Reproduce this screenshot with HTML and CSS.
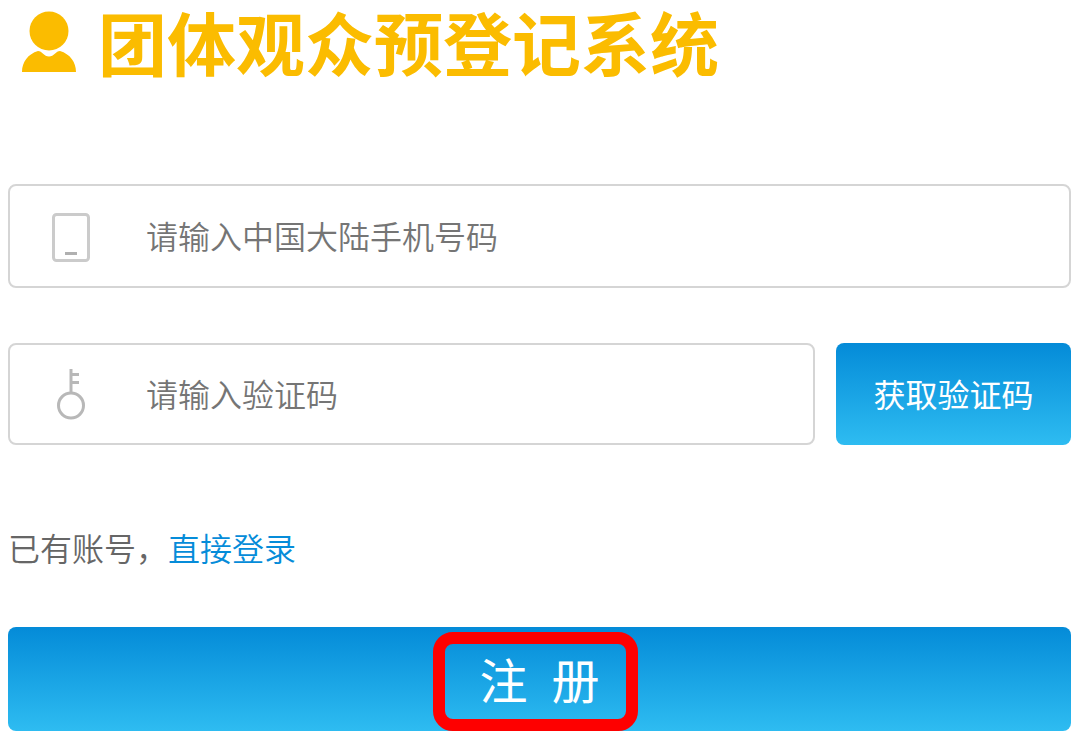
FILE: index.html
```html
<!DOCTYPE html>
<html lang="zh-CN">
<head>
    <meta charset="UTF-8">
    <meta name="viewport" content="width=device-width, initial-scale=1.0">
    <title>团体观众预登记系统</title>
    <link rel="stylesheet" href="styles.css">
</head>
<body>
    <main class="container">
        <header class="header">
            <svg class="user-icon" viewBox="0 0 56 62" aria-hidden="true">
                <circle cx="28" cy="20" r="19.5"/>
                <path d="M1 61C1 51 7 43 17 40C21 40 23 45.500 28 45.500C33 45.500 35 40 39 40C49 43 55 51 55 61Z"/>
            </svg>
            <h1>团体观众预登记系统</h1>
        </header>

        <form class="register-form">
            <label class="field">
                <svg class="field-icon" viewBox="0 0 40 52" aria-hidden="true">
                    <rect x="2.500" y="4.500" width="35" height="46" rx="3"/>
                    <path class="phone-key" d="M14 43.500H26"/>
                </svg>
                <input type="tel" name="phone" placeholder="请输入中国大陆手机号码" aria-label="手机号码">
            </label>

            <div class="code-row">
                <label class="field">
                    <svg class="field-icon key-icon" viewBox="0 0 40 52" aria-hidden="true">
                        <circle cx="20" cy="37.500" r="12.500"/>
                        <path d="M20 25V1"/>
                        <path d="M20 6.500H28M20 14.500H28"/>
                    </svg>
                    <input type="text" name="code" placeholder="请输入验证码" aria-label="验证码">
                </label>
                <button type="button" class="btn code-btn">获取验证码</button>
            </div>

            <p class="login-tip">已有账号，<a href="#login">直接登录</a></p>

            <button type="submit" class="btn submit-btn"><span class="highlight">注&ensp;册</span></button>
        </form>
    </main>
</body>
</html>
```
FILE: styles.css
```css
* {
    box-sizing: border-box;
}
body {
    font-family: "Noto Sans CJK SC", sans-serif;
    font-weight: 350;
    margin: 0;
    background: #fff;
}
.container {
    padding: 0 9px 6px 8px;
}
.header {
    display: flex;
    align-items: center;
    gap: 21px;
    height: 84px;
    padding-left: 13px;
    margin-bottom: 100px;
}
.user-icon {
    width: 56px;
    height: 62px;
    fill: #fbbc00;
}
h1 {
    margin: 0;
    font-size: 69px;
    line-height: 82px;
    padding-bottom: 2px;
    font-weight: 700;
    color: #fbbc00;
}
.field {
    display: flex;
    align-items: center;
    flex: 1;
    gap: 55px;
    height: 104px;
    padding: 0 41px;
    border: 2px solid #d5d5d5;
    border-radius: 8px;
}
.field-icon {
    flex: none;
    width: 40px;
    height: 52px;
    fill: none;
    stroke: #cbcbcb;
    stroke-width: 3;
}
.phone-key {
    stroke: #b0b0b0;
}
.key-icon {
    stroke: #b8b8b8;
}
.field input {
    flex: 1;
    min-width: 0;
    padding: 0 0 3px;
    border: none;
    outline: none;
    background: none;
    font: inherit;
    font-size: 32px;
    line-height: 48px;
    color: #555;
}
.field input::placeholder {
    color: #757575;
    opacity: 1;
}
.code-row {
    display: flex;
    gap: 21px;
    margin-top: 55px;
}
.code-row .field {
    height: 102px;
}
.btn {
    padding: 0 0 3px;
    border: none;
    border-radius: 8px;
    background: linear-gradient(#048bd8, #2ebcf1);
    color: #fff;
    font-family: inherit;
    cursor: pointer;
}
.code-btn {
    width: 235px;
    font-size: 32px;
    font-weight: 400;
}
.login-tip {
    margin: 78px 0 56px;
    font-size: 32px;
    line-height: 48px;
    color: #666;
}
.login-tip a {
    color: #058cd9;
    text-decoration: none;
}
.submit-btn {
    display: block;
    width: 100%;
    height: 104px;
    font-size: 48px;
    line-height: 72px;
    font-weight: 400;
}
.highlight {
    position: relative;
    display: inline-block;
}
/* red frame around the button text */
.highlight::after {
    content: "";
    position: absolute;
    top: -10px;
    right: -38px;
    bottom: -17px;
    left: -46px;
    border: 12px solid #fe0000;
    border-radius: 20px;
}
```
